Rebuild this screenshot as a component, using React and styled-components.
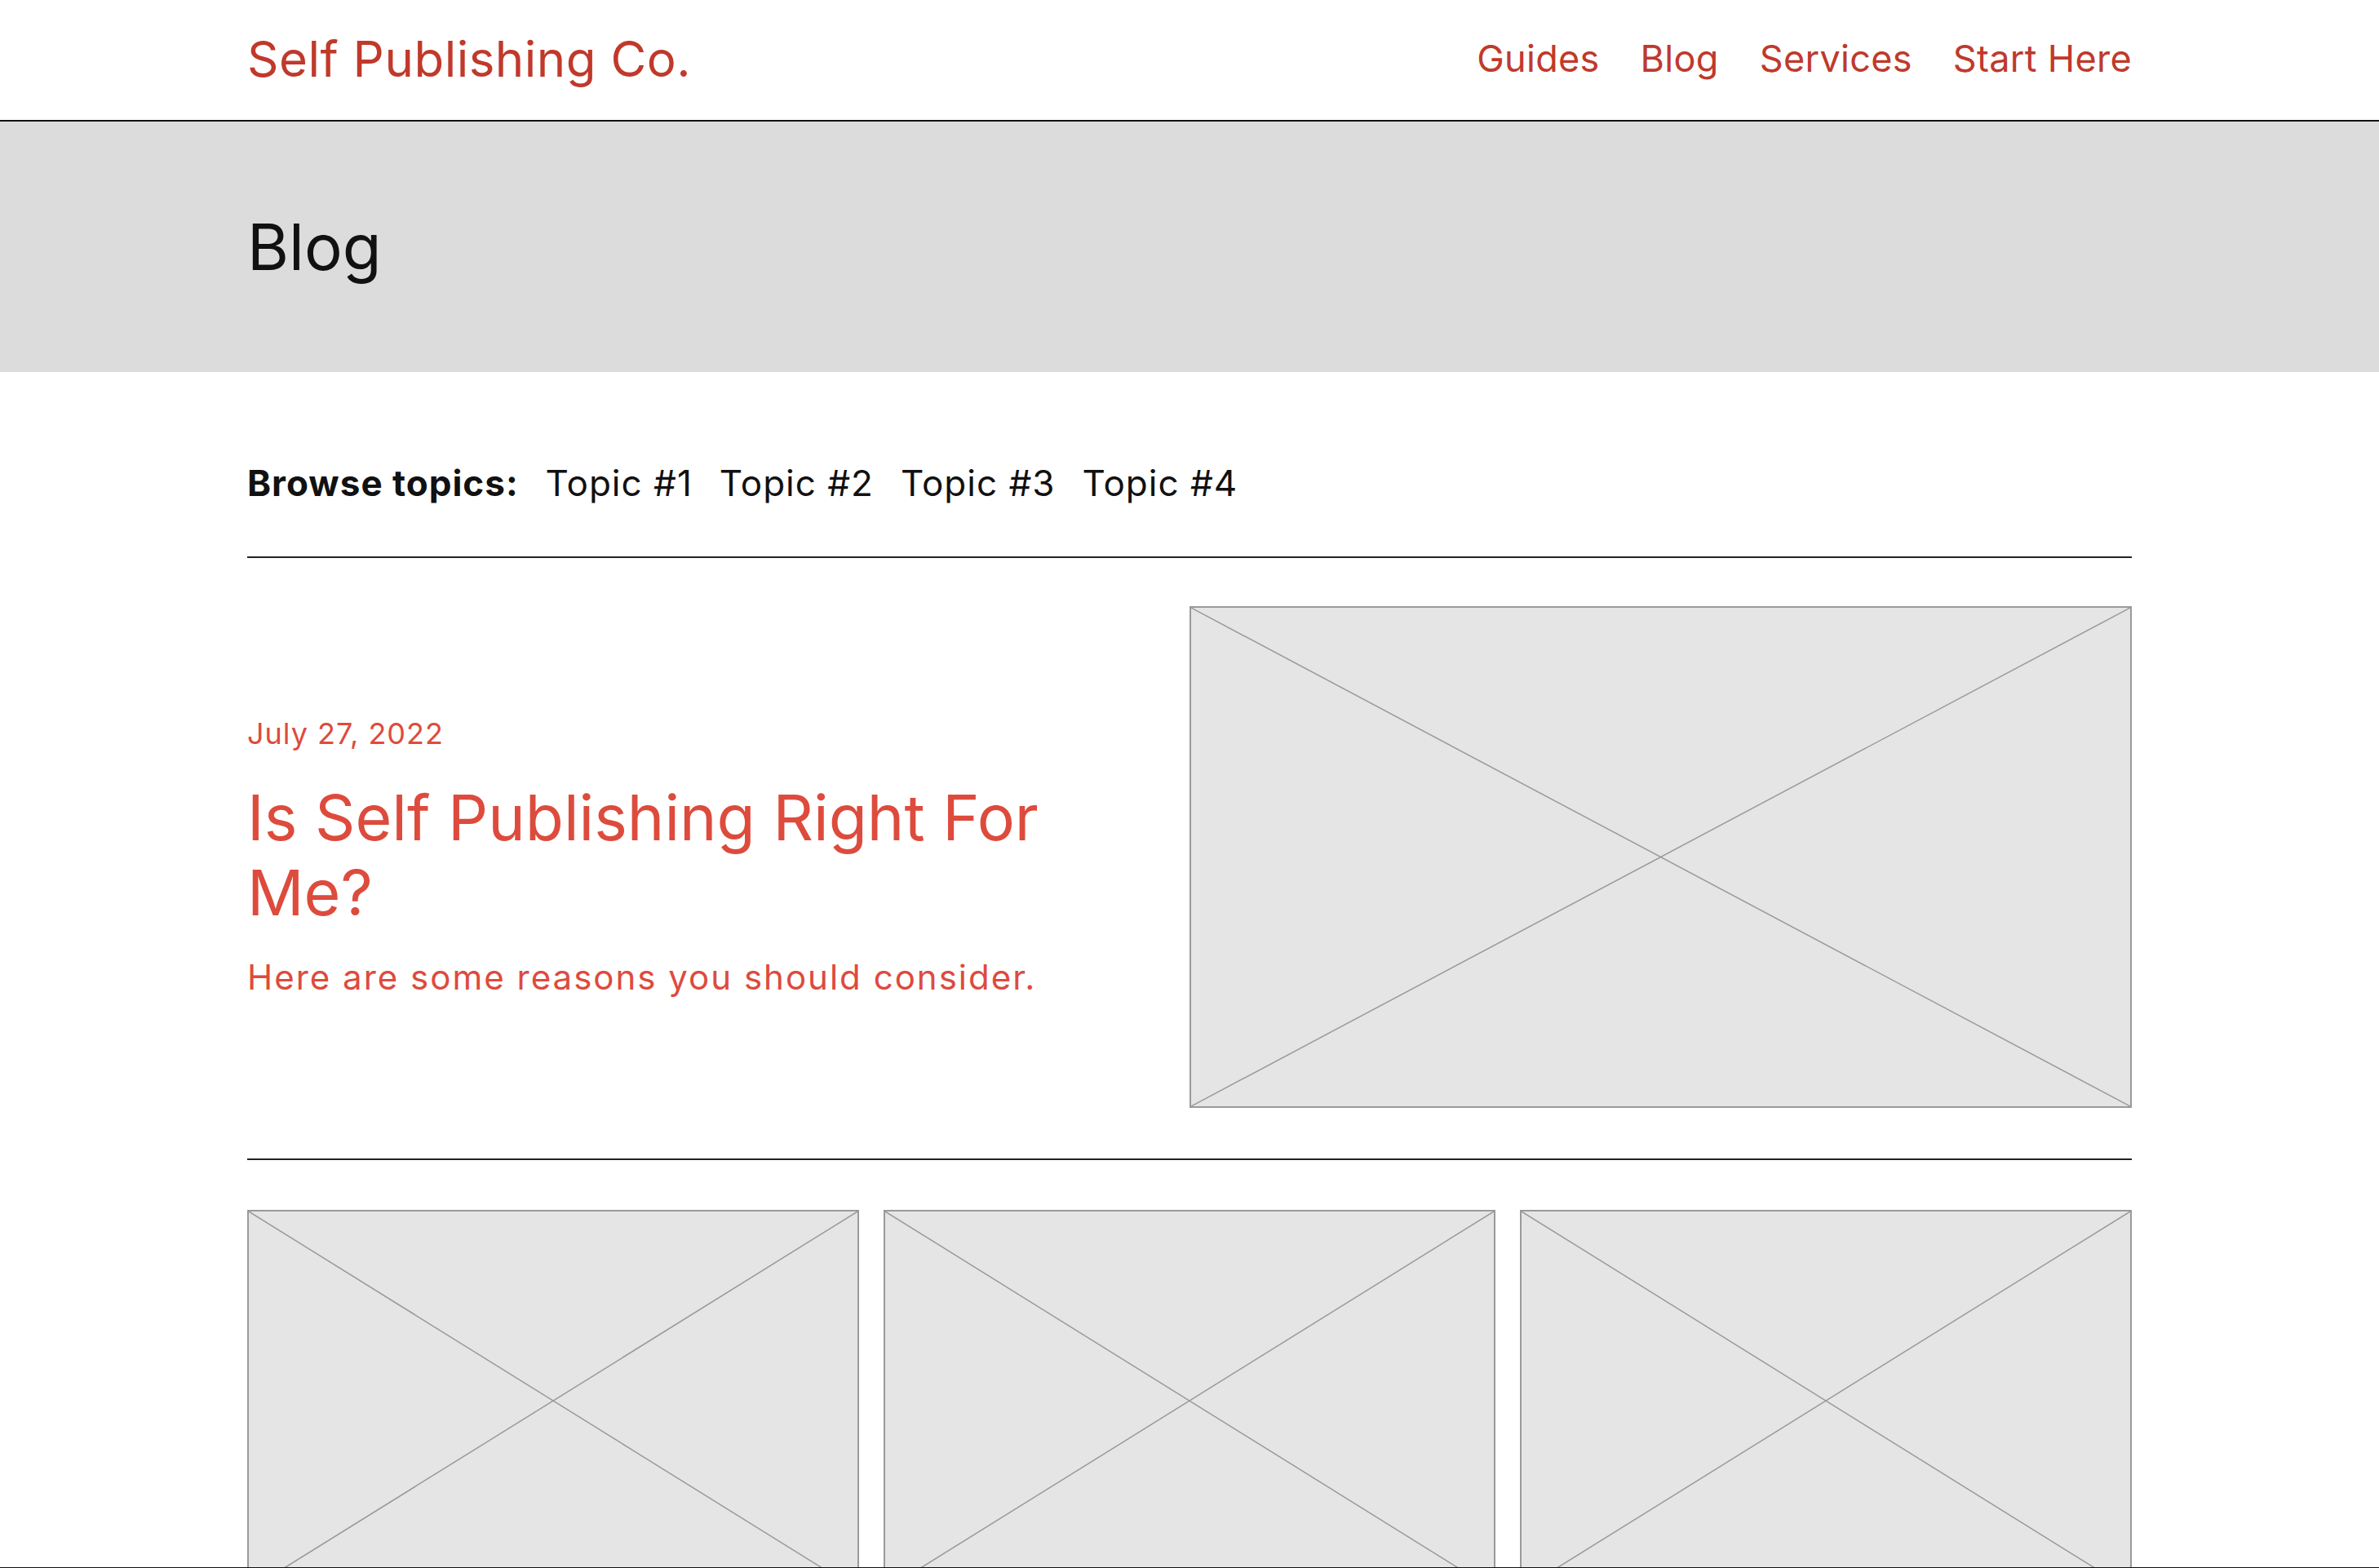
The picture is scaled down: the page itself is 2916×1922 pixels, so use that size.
import React from 'react';
import styled, { createGlobalStyle } from 'styled-components';

const GlobalStyle = createGlobalStyle`
  html, body {
    margin: 0;
    padding: 0;
    background: #fff;
    font-family: Inter, "Noto Sans", "Liberation Sans", sans-serif;
    color: #111;
  }
  * { box-sizing: border-box; }
`;

const Page = styled.div`
  min-height: 100vh;
`;

const Inner = styled.div`
  width: 2310px;
  margin: 0 auto;
`;

const Header = styled.header`
  height: 149px;
  border-bottom: 2px solid #111;
`;

const HeaderRow = styled(Inner)`
  height: 100%;
  display: flex;
  align-items: center;
  justify-content: space-between;
  padding-bottom: 4px;
`;

const Logo = styled.a`
  font-size: 60px;
  letter-spacing: 0.5px;
  color: #c0392b;
  text-decoration: none;
  line-height: 1;
`;

const Nav = styled.nav`
  display: flex;
  gap: 50px;
`;

const NavLink = styled.a`
  font-size: 45px;
  letter-spacing: 0.3px;
  color: #c0392b;
  text-decoration: none;
  line-height: 1;
`;

const Banner = styled.section`
  background: #dcdcdc;
  height: 307px;
  display: flex;
  align-items: center;
`;

const PageTitle = styled.h1`
  margin: 0;
  font-size: 78px;
  font-weight: 400;
  line-height: 1;
  color: #111;
`;

const Topics = styled.div`
  display: flex;
  align-items: center;
  gap: 33px;
  padding: 110px 0 63px;
  border-bottom: 2px solid #222;
  font-size: 44px;
  letter-spacing: 1px;
  line-height: 53px;
`;

const TopicsLabel = styled.strong`
  font-weight: 700;
`;

const Topic = styled.a`
  color: #111;
  text-decoration: none;
`;

const Feature = styled.article`
  display: grid;
  grid-template-columns: 1fr 1fr;
  align-items: center;
  padding: 59px 0 62px;
  border-bottom: 2px solid #222;
`;

const FeatureText = styled.div`
  display: flex;
  flex-direction: column;
  gap: 34px;
  padding-right: 80px;
  color: #dd4b3d;
`;

const Date = styled.div`
  font-size: 36px;
  letter-spacing: 1px;
  line-height: 1.2;
`;

const FeatureTitle = styled.h2`
  margin: 0;
  font-size: 77px;
  font-weight: 400;
  line-height: 1.2;
`;

const Summary = styled.p`
  margin: 0;
  font-size: 42px;
  letter-spacing: 2px;
  line-height: 1.15;
`;

const PlaceholderBox = styled.div`
  height: ${p => p.$height}px;
  background: #e5e5e5;
  border: 2px solid #9a9a9a;

  svg {
    display: block;
    width: 100%;
    height: 100%;
  }
`;

const CardGrid = styled.div`
  display: grid;
  grid-template-columns: repeat(3, 1fr);
  gap: 30px;
  padding-top: 61px;
`;

const BottomEdge = styled.div`
  position: fixed;
  left: 0;
  right: 0;
  bottom: 0;
  height: 1px;
  background: #111;
`;

const Placeholder = ({ height }) => (
  <PlaceholderBox $height={height}>
    <svg viewBox="0 0 100 100" preserveAspectRatio="none">
      <line x1="0" y1="0" x2="100" y2="100" stroke="#9a9a9a" strokeWidth="1.5" vectorEffect="non-scaling-stroke" />
      <line x1="100" y1="0" x2="0" y2="100" stroke="#9a9a9a" strokeWidth="1.5" vectorEffect="non-scaling-stroke" />
    </svg>
  </PlaceholderBox>
);

const navItems = ['Guides', 'Blog', 'Services', 'Start Here'];
const topics = ['Topic #1', 'Topic #2', 'Topic #3', 'Topic #4'];

export default function App() {
  return (
    <Page>
      <GlobalStyle />
      <Header>
        <HeaderRow>
          <Logo href="#">Self Publishing Co.</Logo>
          <Nav>
            {navItems.map(item => (
              <NavLink key={item} href="#">{item}</NavLink>
            ))}
          </Nav>
        </HeaderRow>
      </Header>

      <Banner>
        <Inner>
          <PageTitle>Blog</PageTitle>
        </Inner>
      </Banner>

      <Inner>
        <Topics>
          <TopicsLabel>Browse topics:</TopicsLabel>
          {topics.map(t => (
            <Topic key={t} href="#">{t}</Topic>
          ))}
        </Topics>

        <Feature>
          <FeatureText>
            <Date>July 27, 2022</Date>
            <FeatureTitle>Is Self Publishing Right For Me?</FeatureTitle>
            <Summary>Here are some reasons you should consider.</Summary>
          </FeatureText>
          <Placeholder height={615} />
        </Feature>

        <CardGrid>
          <Placeholder height={468} />
          <Placeholder height={468} />
          <Placeholder height={468} />
        </CardGrid>
      </Inner>
      <BottomEdge />
    </Page>
  );
}
